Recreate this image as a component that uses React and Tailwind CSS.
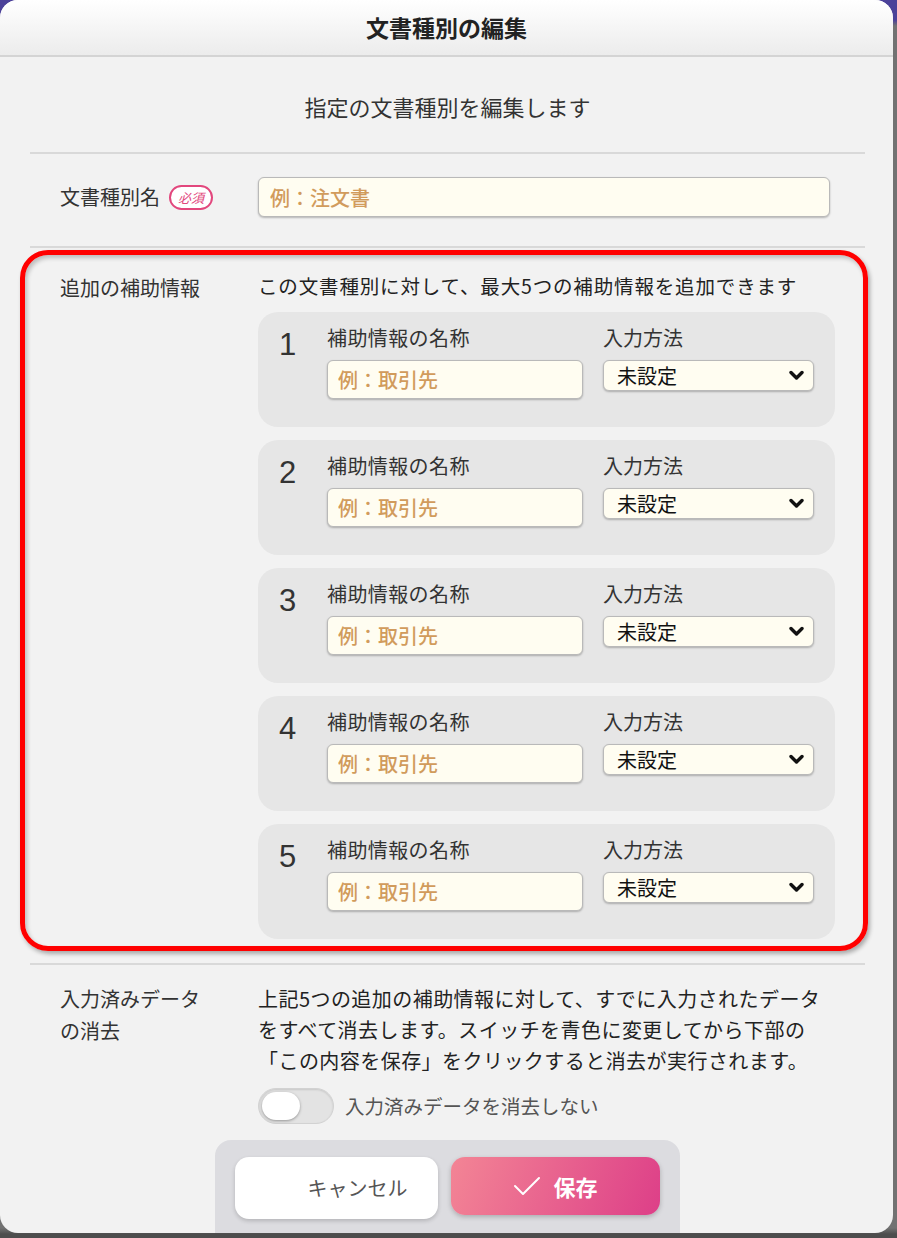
import React from "react";

function Card({ n }) {
  return (
    <div className="flex h-[115px] rounded-[20px] bg-[#e6e6e6] pl-[21px] pr-[20px] pt-[12px]">
      <div className="w-[48px] pt-[4px] text-[31px] leading-[34px] text-[#333] font-['Liberation_Sans',sans-serif]">{n}</div>
      <div className="flex w-[256px] flex-col">
        <div className="text-[20px] leading-[28px] tracking-[0.4px] text-[#333]">補助情報の名称</div>
        <input
          className="mt-[8px] h-[39px] w-full rounded-[6px] border border-[#b9b9b9] bg-[#fffdf1] px-[10px] text-[20px] text-[#333] shadow-[0_1px_2px_rgba(0,0,0,0.25)] outline-none placeholder:font-medium placeholder:text-[#d19b5c]"
          placeholder="例：取引先"
        />
      </div>
      <div className="ml-[20px] flex w-[211px] flex-col">
        <div className="text-[20px] leading-[28px] text-[#333]">入力方法</div>
        <div className="mt-[8px] flex h-[31px] items-center justify-between rounded-[6px] border border-[#b9b9b9] bg-[#fffdf1] pl-[13px] pr-[9px] shadow-[0_1px_2px_rgba(0,0,0,0.25)]">
          <span className="text-[20px] leading-[28px] text-[#111]">未設定</span>
          <svg width="15" height="11" viewBox="0 0 15 11">
            <polyline points="2,2.5 7.5,8 13,2.5" fill="none" stroke="#111" strokeWidth="3.4" strokeLinecap="round" strokeLinejoin="round" />
          </svg>
        </div>
      </div>
    </div>
  );
}

export default function App() {
  return (
    <div className="h-[1238px] w-[897px] overflow-hidden bg-[linear-gradient(to_bottom,#4b4199_0px,#4b4199_20px,#727272_26px,#727272_1228px,#4d4d4d_1234px)] font-['Noto_Sans_CJK_JP','Noto_Sans',sans-serif]">
      <div className="flex h-[1233px] w-[893px] flex-col overflow-hidden rounded-[18px] bg-[#f2f2f2]">
        <div className="flex h-[57px] shrink-0 items-center justify-center border-b-2 border-[#d4d4d4] bg-gradient-to-b from-white to-[#ececec] text-[23px] font-bold text-[#222]">
          文書種別の編集
        </div>
        <div className="flex flex-1 flex-col pl-[30px] pr-[28px]">
          <div className="pb-[30px] pt-[33px] text-center text-[22px] leading-[32px] text-[#333]">
            指定の文書種別を編集します
          </div>
          <div className="h-[2px] bg-[#d9d9d9]" />
          <div className="grid grid-cols-[198px_1fr] items-center pb-[29px] pl-[30px] pr-[35px] pt-[23px]">
            <div className="flex items-center">
              <span className="text-[20px] leading-[28px] text-[#333]">文書種別名</span>
              <span className="ml-[9px] flex h-[25px] items-center rounded-full border-2 border-[#e2477d] bg-white px-[7px] text-[13px] italic leading-none text-[#e2477d]">
                必須
              </span>
            </div>
            <input
              className="h-[40px] w-full rounded-[6px] border border-[#b9b9b9] bg-[#fffdf1] px-[11px] text-[20px] text-[#333] shadow-[0_1px_2px_rgba(0,0,0,0.25)] outline-none placeholder:font-medium placeholder:text-[#d19b5c]"
              placeholder="例：注文書"
            />
          </div>
          <div className="h-[2px] bg-[#d9d9d9]" />
          <div className="-ml-[10px] -mr-[3px] mt-[2px] grid grid-cols-[198px_1fr] rounded-[28px] border-[5px] border-[#ff0000] pb-[7px] pl-[35px] pr-[28px] pt-[17px] shadow-[2px_3px_4px_rgba(0,0,0,0.3),inset_2px_3px_4px_rgba(0,0,0,0.22)]">
            <div className="pt-[2px] text-[20px] leading-[28px] text-[#333]">追加の補助情報</div>
            <div className="flex flex-col">
              <div className="whitespace-nowrap text-[19.5px] leading-[28px] tracking-[0.85px] text-[#222]">
                この文書種別に対して、最大5つの補助情報を追加できます
              </div>
              <div className="mt-[12px] flex flex-col gap-[13px]">
                {[1, 2, 3, 4, 5].map((n) => (
                  <Card key={n} n={n} />
                ))}
              </div>
            </div>
          </div>
          <div className="mt-[12px] h-[2px] bg-[#d9d9d9]" />
          <div className="grid grid-cols-[198px_1fr] pl-[30px] pt-[18px]">
            <div className="text-[20px] leading-[32px] text-[#333]">
              入力済みデータ
              <br />
              の消去
            </div>
            <div className="flex flex-col">
              <div className="whitespace-nowrap text-[20px] leading-[31px] tracking-[0.45px] text-[#222]">
                上記5つの追加の補助情報に対して、すでに入力されたデータ
                <br />
                をすべて消去します。スイッチを青色に変更してから下部の
                <br />
                「この内容を保存」をクリックすると消去が実行されます。
              </div>
              <div className="mt-[12px] flex items-center">
                <div className="flex h-[36px] w-[76px] items-center rounded-full border border-[#d2d2d2] bg-[#e3e3e3] pl-[3px] shadow-[inset_0_1px_2px_rgba(0,0,0,0.12)]">
                  <div className="h-[28px] w-[38px] rounded-full bg-white shadow-[0_1px_3px_rgba(0,0,0,0.35)]" />
                </div>
                <span className="ml-[11px] text-[19.5px] leading-[28px] text-[#555]">入力済みデータを消去しない</span>
              </div>
            </div>
          </div>
          <div className="mx-auto mt-[16px] flex w-[465px] flex-1 justify-center gap-[13px] rounded-t-[16px] bg-[#dcdce0] pt-[17px]">
            <div className="flex h-[62px] w-[203px] items-center justify-center rounded-[14px] bg-white pl-[42px] text-[20px] text-[#555] shadow-[0_2px_4px_rgba(0,0,0,0.18)]">
              キャンセル
            </div>
            <div className="flex h-[58px] w-[209px] items-center justify-center gap-[12px] rounded-[14px] bg-[linear-gradient(110deg,#f38595,#dd3f88)] text-[22px] font-bold text-white shadow-[0_2px_5px_rgba(0,0,0,0.22)]">
              <svg width="28" height="20" viewBox="0 0 28 20">
                <polyline points="2,10 10,18 26,2" fill="none" stroke="white" strokeWidth="2" strokeLinecap="round" strokeLinejoin="round" />
              </svg>
              <span>保存</span>
            </div>
          </div>
        </div>
      </div>
    </div>
  );
}
